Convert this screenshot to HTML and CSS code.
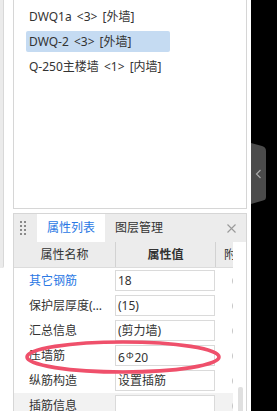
FILE: index.html
```html
<!DOCTYPE html>
<html>
<head>
<meta charset="utf-8">
<title>属性列表</title>
<link rel="stylesheet" href="styles.css">
</head>
<body>
<div class="app">
  <div class="main">
    <div class="edge"></div>
    <div class="panels">
      <div class="list-panel">
        <div class="item">DWQ1a &lt;3&gt; [外墙]</div>
        <div class="item selected">DWQ-2 &lt;3&gt; [外墙]</div>
        <div class="item">Q-250主楼墙 &lt;1&gt; [内墙]</div>
      </div>

      <div class="prop-panel">
        <div class="tabbar">
          <span class="grip">
            <i></i><i></i><i></i><i></i><i></i><i></i><i></i><i></i>
          </span>
          <span class="tab active">属性列表</span>
          <span class="tab">图层管理</span>
          <span class="close">
            <svg width="9" height="9" viewBox="0 0 9 9"><path d="M0.5 0.5 L8.5 8.5 M8.5 0.5 L0.5 8.5" stroke="#9a9a9a" stroke-width="1.1" fill="none"/></svg>
          </span>
        </div>

        <div class="prop-body">
          <div class="table">
            <div class="thead">
              <div class="th">属性名称</div>
              <div class="th strong">属性值</div>
              <div class="th extra">附加</div>
            </div>
            <div class="row">
              <div class="name link">其它钢筋</div>
              <div class="val"><div class="box">18</div></div>
              <div class="chk"><span></span></div>
            </div>
            <div class="row">
              <div class="name">保护层厚度(mm)</div>
              <div class="val"><div class="box">(15)</div></div>
              <div class="chk"><span></span></div>
            </div>
            <div class="row">
              <div class="name">汇总信息</div>
              <div class="val"><div class="box">(剪力墙)</div></div>
              <div class="chk"><span></span></div>
            </div>
            <div class="row">
              <div class="name">压墙筋</div>
              <div class="val"><div class="box">6<span class="grade">Φ</span>20</div></div>
              <div class="chk"><span></span></div>
            </div>
            <div class="row">
              <div class="name">纵筋构造</div>
              <div class="val"><div class="box">设置插筋</div></div>
              <div class="chk"><span></span></div>
            </div>
            <div class="row hover">
              <div class="name">插筋信息</div>
              <div class="val"><div class="box"></div></div>
              <div class="chk"><span></span></div>
            </div>
          </div>
          <div class="vscroll"><div class="thumb"></div></div>
        </div>
      </div>
    </div>
  </div>

  <div class="side">
    <svg class="handle" width="15" height="62" viewBox="0 0 15 62">
      <path d="M0 0 L11 3 Q15 4 15 8 L15 54 Q15 57 12 57.5 L0 61 Z" fill="#4b4b4b"/>
      <polyline points="9.5,27 5.5,31 9.5,35" fill="none" stroke="#a8a8a8" stroke-width="1.2"/>
    </svg>
  </div>

  <svg class="mark" width="210" height="44" viewBox="0 0 210 44">
    <ellipse cx="103" cy="22" rx="96" ry="15" fill="none" stroke="#ef506b" stroke-width="3.6"/>
  </svg>
</div>
</body>
</html>
```

FILE: styles.css
```css
body {
  margin: 0;
  font-family: "Noto Sans", "Noto Sans CJK SC", sans-serif;
  font-size: 12px;
  color: #333;
  background: #fff;
}
.app {
  position: relative;
  display: flex;
  width: 277px;
  height: 411px;
  overflow: hidden;
}
.main {
  display: flex;
  width: 251px;
  background: #fff;
}
.edge {
  width: 3px;
  height: 268px;
  background: #ebebeb;
  border-right: 1px solid #d8d8d8;
  border-bottom-right-radius: 2px;
}
.panels {
  padding-left: 9px;
  width: 234px;
}

/* 构件列表 */
.list-panel {
  box-sizing: border-box;
  height: 209px;
  border: 1px solid #d6d6d6;
  border-top: none;
  padding-top: 6px;
}
.item {
  width: 141px;
  height: 21px;
  line-height: 21px;
  margin: 0 0 4px 12px;
  padding-left: 3px;
  border-radius: 2px;
  white-space: nowrap;
  word-spacing: 2px;
}
.item.selected {
  background: #c5dbf2;
}

/* 属性面板 */
.prop-panel {
  margin-top: 4px;
  height: 210px;
  border: 1px solid #d6d6d6;
  border-bottom: none;
}
.tabbar {
  display: flex;
  align-items: center;
  height: 28px;
  background: #ececec;
}
.grip {
  display: grid;
  grid-template-columns: 2px 2px;
  column-gap: 2px;
  row-gap: 2px;
  margin-left: 6px;
  margin-right: 11px;
}
.grip i {
  width: 2px;
  height: 2px;
  background: #8a8a8a;
}
.tab {
  height: 28px;
  line-height: 28px;
  padding: 0 10px;
  color: #333;
}
.tab.active {
  background: #fff;
  color: #2a78e4;
}
.close {
  margin-left: auto;
  margin-right: 10px;
  display: flex;
}

.prop-body {
  display: flex;
}
.table {
  width: 219px;
}
.thead {
  display: grid;
  grid-template-columns: 101px 100px 18px;
  height: 25px;
  background: #ececec;
  border-bottom: 1px solid #dcdcdc;
}
.th {
  line-height: 25px;
  text-align: center;
  white-space: nowrap;
  overflow: hidden;
}
.th.strong {
  font-weight: bold;
  border-left: 1px solid #d2d2d2;
}
.th.extra {
  border-left: 1px solid #d2d2d2;
  text-align: left;
  padding-left: 8px;
}
.row {
  display: grid;
  grid-template-columns: 101px 100px 18px;
  height: 25px;
}
.row.hover {
  background: #f2f2f2;
}
.name {
  padding-left: 15px;
  line-height: 25px;
  white-space: nowrap;
  overflow: hidden;
  text-overflow: ellipsis;
  padding-right: 10px;
}
.name.link {
  color: #2a78e4;
}
.val {
  padding-top: 2px;
}
.box {
  box-sizing: border-box;
  width: 100px;
  height: 21px;
  line-height: 19px;
  padding-left: 2px;
  border: 1px solid #dadada;
  background: #fff;
  white-space: nowrap;
}
.grade {
  font-size: 9px;
  vertical-align: 3px;
  margin: 0 1px;
}
.chk {
  overflow: hidden;
  display: flex;
  align-items: center;
}
.chk span {
  flex: none;
  width: 10px;
  height: 10px;
  margin-left: 17px;
  border: 1px solid #c4c4c4;
  border-radius: 50%;
}
.vscroll {
  flex: 1;
}
.thumb {
  width: 5px;
  height: 40px;
  margin: 145px 0 0 5px;
  background: #e0e0e0;
  border-radius: 2px;
}

.side {
  flex: 1;
  background: #000;
}
.handle {
  display: block;
  margin-top: 143px;
}

.mark {
  position: absolute;
  left: 20px;
  top: 335px;
}
```
